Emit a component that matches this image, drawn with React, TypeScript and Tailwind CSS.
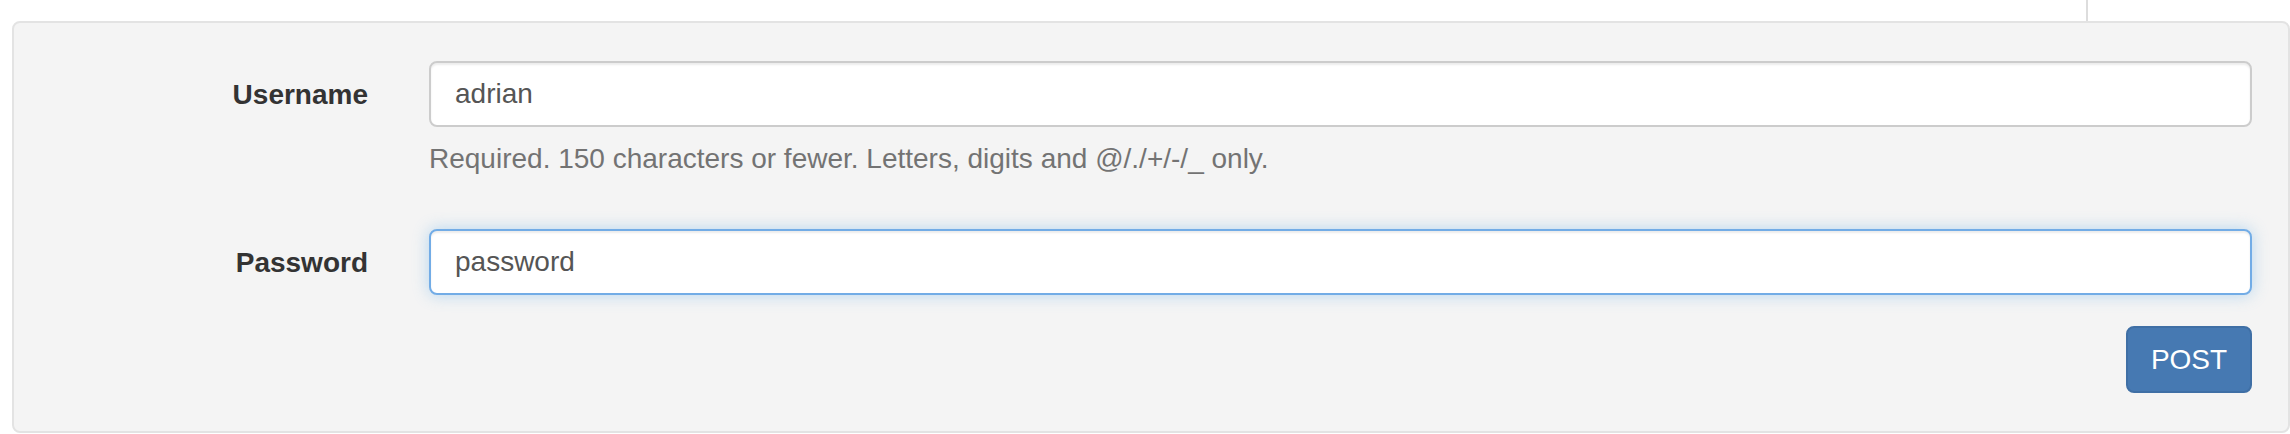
import React from "react";

export default function App() {
  return (
    <div className="w-[2290px] h-[434px] overflow-hidden bg-white font-['Liberation_Sans',Arial,sans-serif] text-[28px] leading-[40px]">
      <div className="flex h-[21px]">
        <div className="ml-[12px] w-[2076px] border-r-2 border-[#dddddd]" />
      </div>
      <div className="ml-[12px] w-[2278px] rounded-[8px] border-2 border-[#e3e3e3] bg-[#f4f4f4] pl-[38px] pr-[36px] pt-[38px] pb-[38px]">
        <div className="grid grid-cols-[316px_1fr] gap-x-[61px]">
          <label className="pt-[14px] text-right font-bold text-[#333333]">Username</label>
          <div>
            <input
              type="text"
              defaultValue="adrian"
              className="block h-[66px] w-full rounded-[8px] border-2 border-[#cccccc] bg-white px-[24px] text-[28px] text-[#555555] shadow-[inset_0_2px_2px_rgba(0,0,0,0.075)] outline-none"
            />
            <p className="mt-[12px] mb-[20px] text-[#737373]">
              Required. 150 characters or fewer. Letters, digits and @/./+/-/_ only.
            </p>
          </div>
        </div>
        <div className="mt-[30px] grid grid-cols-[316px_1fr] gap-x-[61px]">
          <label className="pt-[14px] text-right font-bold text-[#333333]">Password</label>
          <div>
            <input
              type="text"
              defaultValue="password"
              className="block h-[66px] w-full rounded-[8px] border-2 border-[#72ace6] bg-white px-[24px] text-[28px] text-[#555555] shadow-[inset_0_2px_2px_rgba(0,0,0,0.075),0_0_16px_rgba(102,175,233,0.45)] outline-none"
            />
          </div>
        </div>
        <div className="mt-[31px] flex justify-end">
          <button
            type="button"
            className="flex h-[67px] w-[126px] items-center justify-center rounded-[8px] border-2 border-[#3f6fa5] bg-[#4679b2] text-[28px] leading-[40px] text-white"
          >
            POST
          </button>
        </div>
      </div>
    </div>
  );
}
